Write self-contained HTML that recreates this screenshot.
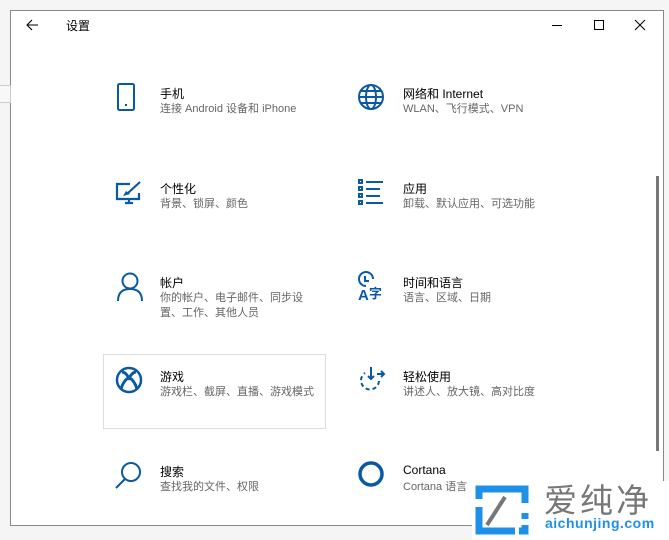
<!DOCTYPE html>
<html><head><meta charset="utf-8"><style>
body{margin:0;width:669px;height:540px;background:#f5f5f5;position:relative;overflow:hidden;font-family:"Liberation Sans","Noto Sans CJK SC",sans-serif}
.win{position:absolute;left:10px;top:10px;width:654px;height:516px;background:#fff;border:1px solid #888;box-sizing:border-box}
.t{position:absolute;font-size:12px;color:#000;white-space:nowrap}
.s{position:absolute;font-size:11px;color:#666;white-space:nowrap;line-height:15px}
svg{position:absolute}
</style></head><body>
<div class="win"></div>
<div style="position:absolute;left:0;top:85px;width:10px;height:16px;border:1px solid #ccc;border-left:none;background:#f8f8f8"></div>
<svg style="left:25px;top:18px" width="14" height="14" viewBox="0 0 14 14"><path d="M13 7H2M7 2L2 7l5 5" stroke="#000" fill="none" stroke-width="1.1"/></svg>
<div class="t" style="left:66px;top:17px;font-size:12px">设置</div>
<svg style="left:550px;top:18px" width="14" height="14"><path d="M2 7.5h10" stroke="#000"/></svg>
<svg style="left:592px;top:18px" width="14" height="14"><rect x="2.5" y="2.5" width="9" height="9" fill="none" stroke="#000"/></svg>
<svg style="left:633px;top:18px" width="14" height="14"><path d="M2 2l10 10M12 2L2 12" stroke="#000"/></svg>
<div style="position:absolute;left:656px;top:176px;width:3px;height:275px;background:#777"></div>

<svg style="left:116px;top:83px" width="22" height="28"><rect x="2" y="1" width="16" height="26" rx="1.5" fill="none" stroke="#0a5aa3" stroke-width="2"/><rect x="9" y="21" width="2" height="2" fill="#0a5aa3"/></svg>
<div class="t" style="left:160px;top:85px">手机</div>
<div class="s" style="left:160px;top:102px">连接 Android 设备和 iPhone</div>

<svg style="left:357px;top:83px" width="28" height="28"><g fill="none" stroke="#0a5aa3" stroke-width="2"><circle cx="14" cy="14" r="12"/><ellipse cx="14" cy="14" rx="5" ry="12"/><path d="M2 14h24M4 8h20M4 20h20"/></g></svg>
<div class="t" style="left:403px;top:85px">网络和 Internet</div>
<div class="s" style="left:403px;top:102px">WLAN、飞行模式、VPN</div>

<svg style="left:115px;top:180px" width="28" height="26"><g fill="none" stroke="#0a5aa3" stroke-width="2.2"><path d="M15 4H2v15h22v-6"/><path d="M10 23h8M14 19v4"/><path d="M25 2L13 13"/></g><path d="M8 16l3-5 4 3z" fill="#0a5aa3"/></svg>
<div class="t" style="left:160px;top:180px">个性化</div>
<div class="s" style="left:160px;top:197px">背景、锁屏、颜色</div>

<svg style="left:357px;top:178px" width="28" height="28"><g fill="none" stroke="#0a5aa3" stroke-width="2"><rect x="2" y="2" width="3" height="3"/><rect x="2" y="9" width="3" height="3"/><rect x="2" y="16" width="3" height="3"/><rect x="2" y="23" width="3" height="3"/><path d="M9 4h17M9 11h14M9 18h14M9 25h17"/></g></svg>
<div class="t" style="left:403px;top:180px">应用</div>
<div class="s" style="left:403px;top:197px">卸载、默认应用、可选功能</div>

<svg style="left:116px;top:272px" width="28" height="30"><g fill="none" stroke="#0a5aa3" stroke-width="2"><circle cx="14" cy="9" r="7.5"/><path d="M2 29c0-9 5-12 12-12s12 3 12 12"/></g></svg>
<div class="t" style="left:160px;top:274px">帐户</div>
<div class="s" style="left:160px;top:291px">你的帐户、电子邮件、同步设<br>置、工作、其他人员</div>

<svg style="left:357px;top:271px" width="30" height="32"><g fill="none" stroke="#0a5aa3" stroke-width="2"><path d="M9 15A7 7 0 1 1 16 8"/><path d="M8 5v5h4"/></g><text x="1" y="29" font-size="15" font-weight="bold" fill="#0a5aa3" font-family="Liberation Sans">A</text><text x="12" y="27" font-size="13" font-weight="bold" fill="#0a5aa3" font-family="Noto Sans CJK SC">字</text></svg>
<div class="t" style="left:403px;top:274px">时间和语言</div>
<div class="s" style="left:403px;top:291px">语言、区域、日期</div>

<div style="position:absolute;left:103px;top:354px;width:223px;height:75px;border:1px solid #ddd;box-sizing:border-box"></div>
<svg style="left:115px;top:366px" width="28" height="28"><circle cx="14" cy="14" r="12" fill="none" stroke="#0a5aa3" stroke-width="2.5"/><path d="M6 23c2-7 6-11 8-11s6 4 8 11M7 6c3 0 5 3 7 6 2-3 4-6 7-6" fill="none" stroke="#0a5aa3" stroke-width="3"/></svg>
<div class="t" style="left:160px;top:368px">游戏</div>
<div class="s" style="left:160px;top:385px">游戏栏、截屏、直播、游戏模式</div>

<svg style="left:357px;top:365px" width="30" height="30"><g fill="none" stroke="#0a5aa3" stroke-width="2"><path d="M22 16A9 9 0 1 1 8 8" stroke-dasharray="4 3"/><path d="M14 2v12M11 11l3 3 3-3M20 9h7M24 6l3 3-3 3"/></g></svg>
<div class="t" style="left:403px;top:368px">轻松使用</div>
<div class="s" style="left:403px;top:385px">讲述人、放大镜、高对比度</div>

<svg style="left:114px;top:460px" width="30" height="30"><g fill="none" stroke="#0a5aa3" stroke-width="2"><circle cx="17" cy="12" r="9"/><path d="M11 19L2 28"/></g></svg>
<div class="t" style="left:160px;top:463px">搜索</div>
<div class="s" style="left:160px;top:480px">查找我的文件、权限</div>

<svg style="left:357px;top:460px" width="30" height="30"><circle cx="14" cy="14" r="11" fill="none" stroke="#0a5aa3" stroke-width="3.5"/></svg>
<div class="t" style="left:403px;top:463px">Cortana</div>
<div class="s" style="left:403px;top:480px">Cortana 语言</div>

<div style="position:absolute;left:472px;top:481px;width:197px;height:59px;background:#fff"></div>
<svg style="left:475px;top:485px" width="58" height="50"><path d="M4 14V4h46v14M4 22v24h36M50 28v6M50 40v6h-6" fill="none" stroke="#1e90e8" stroke-width="7"/><path d="M12 40L30 12" stroke="#777" stroke-width="4"/></svg>
<div style="position:absolute;left:544px;top:478px;font-size:33px;color:#777;letter-spacing:3px;font-family:'Noto Sans CJK SC',sans-serif;line-height:40px">爱纯净</div>
<div style="position:absolute;left:545px;top:515px;font-size:14px;font-weight:bold;color:#1e90e8;letter-spacing:0.5px">aichunjing.com</div>
</body></html>
